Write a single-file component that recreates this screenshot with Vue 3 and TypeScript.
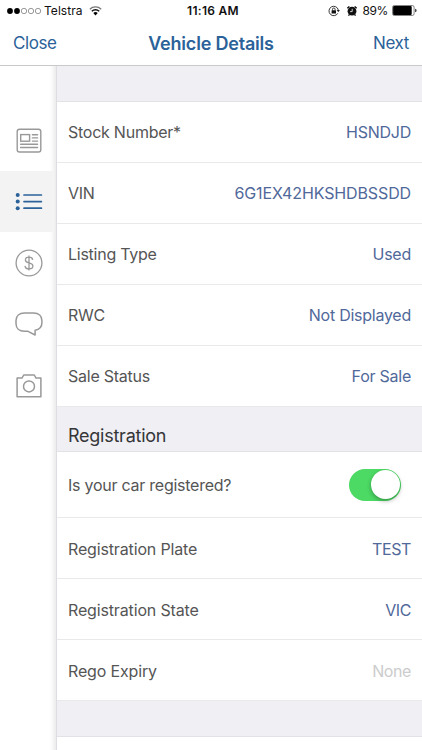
<script setup lang="ts">
interface Field {
  label: string
  value: string
  tone?: string
}

const vehicleFields: Field[] = [
  { label: 'Stock Number*', value: 'HSNDJD' },
  { label: 'VIN', value: '6G1EX42HKSHDBSSDD', tone: 'code' },
  { label: 'Listing Type', value: 'Used' },
  { label: 'RWC', value: 'Not Displayed' },
  { label: 'Sale Status', value: 'For Sale' },
]

const registrationFields: Field[] = [
  { label: 'Registration Plate', value: 'TEST' },
  { label: 'Registration State', value: 'VIC' },
  { label: 'Rego Expiry', value: 'None', tone: 'empty' },
]
</script>

<template>
  <div class="screen">
    <header class="top">
      <div class="status">
        <div class="carrier">
          <svg class="dots" width="36" height="8" viewBox="0 0 36 8">
            <circle cx="3" cy="4" r="2.9" fill="#000" />
            <circle cx="10" cy="4" r="2.9" fill="#000" />
            <g fill="none" stroke="#555" stroke-width=".6">
              <circle cx="17" cy="4" r="2.7" />
              <circle cx="24" cy="4" r="2.7" />
              <circle cx="31" cy="4" r="2.7" />
            </g>
          </svg>
          <span class="carrier-name">Telstra</span>
          <svg class="wifi" width="13" height="10" viewBox="0 0 13 10">
            <path d="M.8 3.2a8.2 8.2 0 0 1 11.4 0" fill="none" stroke="#777" stroke-width="1.3" />
            <path d="M2.8 5.3a5.3 5.3 0 0 1 7.4 0" fill="none" stroke="#111" stroke-width="1.5" />
            <path d="M4.3 7.1a3.2 3.2 0 0 1 4.4 0L6.5 9.4z" fill="#000" />
          </svg>
        </div>
        <span class="time">11:16 AM</span>
        <div class="power">
          <svg width="12" height="12" viewBox="0 0 12 12">
            <path d="M9.8 8.3A4.7 4.7 0 1 1 10.3 5" fill="none" stroke="#222" stroke-width=".9" />
            <path d="M8.7 5h3.2l-1.6 2.2z" fill="#222" />
            <rect x="3.6" y="5.3" width="4.4" height="3.3" rx=".4" fill="#111" />
            <path d="M4.5 5.5V4.3a1.3 1.3 0 0 1 2.6 0v1.2" fill="none" stroke="#111" stroke-width=".8" />
          </svg>
          <svg class="alarm" width="12" height="12" viewBox="0 0 12 12">
            <circle cx="6" cy="6.2" r="4.4" fill="#111" />
            <path d="M1.3 3.3 3.4 1.4M8.6 1.4l2.1 1.9M3.2 9.6 2.5 10.7M8.8 9.6l.7 1.1" stroke="#111" stroke-width="1.4" />
            <path d="M6.2 3.8v2.8H4.1" fill="none" stroke="#fff" stroke-width=".8" />
          </svg>
          <span class="percent">89%</span>
          <svg width="25" height="11" viewBox="0 0 25 11">
            <rect x=".5" y=".5" width="21.6" height="10" rx="1.8" fill="#fff" stroke="#333" stroke-width=".6" />
            <rect x="1.1" y="1.1" width="18.6" height="8.8" rx="1" fill="#000" />
            <path d="M23.2 3.7q1.3.3 1.3 1.8t-1.3 1.8z" fill="#222" />
          </svg>
        </div>
      </div>
      <nav class="navbar">
        <span class="close">Close</span>
        <h1>Vehicle Details</h1>
        <span class="next">Next</span>
      </nav>
    </header>

    <div class="body">
      <aside class="sidebar">
        <div class="tab">
          <svg width="28" height="28" viewBox="0 0 28 28" fill="none" stroke="#999" stroke-width="1.4" stroke-linecap="round">
            <rect x="2.2" y="2.2" width="23.6" height="22.8" rx="2.3" />
            <rect x="5.7" y="7.6" width="8.9" height="6.6" />
            <path d="M17.4 7.7h5.2M17.4 10.9h5.2M17.4 14.1h5.2M5.6 17.3h17M5.6 20.5h17" />
          </svg>
        </div>
        <div class="tab active">
          <svg width="28" height="28" viewBox="0 0 28 28" fill="none" stroke="#2b6299" stroke-width="1.7" stroke-linecap="round">
            <path d="M9 7h17.4M9 13.600h17.4M9 20.200h17.4" />
            <g fill="#2b6299" stroke="none">
              <circle cx="2.7" cy="7" r="2" />
              <circle cx="2.7" cy="13.6" r="2" />
              <circle cx="2.7" cy="20.2" r="2" />
            </g>
          </svg>
        </div>
        <div class="tab">
          <svg width="28" height="28" viewBox="0 0 28 28" fill="none" stroke="#999" stroke-width="1.3">
            <circle cx="14" cy="14" r="12.9" />
            <path d="M17.7 10.8c-.2-1.6-1.6-2.6-3.7-2.6s-3.6 1-3.6 2.7c0 4 7.5 2 7.5 6.1 0 1.8-1.6 2.9-3.9 2.9s-3.9-1.1-4-3M14 6.5v15" />
          </svg>
        </div>
        <div class="tab">
          <svg width="28" height="28" viewBox="0 0 28 28" fill="none" stroke="#999" stroke-width="1.5" stroke-linejoin="round">
            <path d="M9.5 3h9c5.2 0 8.4 3 8.4 7.4v2.4c0 4.500-2.400 6.700-6.800 7.500v4.700L13 21.300H9.500C4.200 21.300 1 18 1 13.500V10.400C1 6 4.300 3 9.500 3z" />
          </svg>
        </div>
        <div class="tab">
          <svg width="28" height="28" viewBox="0 0 28 28" fill="none" stroke="#999" stroke-width="1.5" stroke-linejoin="round">
            <path d="M2.100 7.100h4.900l1.700-3.100h10.600l1.700 3.100h4.900v18.700H2.100z" />
            <circle cx="14" cy="15.400" r="5.500" />
          </svg>
        </div>
      </aside>

      <main class="form">
        <div class="band"></div>
        <div v-for="field in vehicleFields" :key="field.label" class="row">
          <span class="label">{{ field.label }}</span>
          <span class="value" :class="field.tone">{{ field.value }}</span>
        </div>
        <h2 class="band titled">Registration</h2>
        <div class="row tall">
          <span class="label">Is your car registered?</span>
          <span class="switch"><i></i></span>
        </div>
        <div v-for="field in registrationFields" :key="field.label" class="row registration">
          <span class="label">{{ field.label }}</span>
          <span class="value" :class="field.tone">{{ field.value }}</span>
        </div>
        <div class="band"></div>
      </main>
    </div>
  </div>
</template>

<style>
body {
  background: #fff;
}
</style>

<style scoped>
.screen {
  width: 422px;
  height: 750px;
  display: flex;
  flex-direction: column;
  overflow: hidden;
  background: #fff;
  font-family: Inter, sans-serif;
}

.top {
  flex: none;
  height: 66px;
  box-sizing: border-box;
  border-bottom: 1px solid #c9c9cc;
}

.status {
  height: 21px;
  display: grid;
  grid-template-columns: 1fr auto 1fr;
  align-items: center;
  padding: 0 7px;
  font-size: 12px;
  line-height: 21px;
  color: #111;
}

.carrier,
.power {
  display: flex;
  align-items: center;
}

.carrier-name {
  margin-left: 1px;
  letter-spacing: 0.05px;
}

.wifi {
  margin-left: 6px;
}

.time {
  font-weight: 600;
  letter-spacing: 0.3px;
  margin-left: 4px;
}

.power {
  justify-content: flex-end;
  margin-right: -2px;
}

.alarm {
  margin: 0 5px 0 6px;
}

.percent {
  margin-right: 4px;
  letter-spacing: -0.4px;
}

.navbar {
  height: 44px;
  display: grid;
  grid-template-columns: 1fr auto 1fr;
  align-items: center;
  padding: 0 13px;
  color: #2b6299;
  font-size: 17px;
  letter-spacing: -0.4px;
}

h1 {
  margin: 0;
  font-size: 18px;
  font-weight: 600;
  letter-spacing: -0.2px;
}

.next {
  text-align: right;
}

.body {
  flex: 1;
  min-height: 0;
  display: flex;
}

.sidebar {
  flex: none;
  width: 56px;
  box-sizing: border-box;
  padding-top: 44px;
  background: linear-gradient(to right, transparent 49px, rgba(0, 0, 0, 0.02) 52px, rgba(0, 0, 0, 0.08));
}

.tab {
  height: 61.2px;
  width: 53px;
  box-sizing: border-box;
  padding-left: 15px;
  display: flex;
  align-items: center;
}

.active {
  background: #f3f3f3;
}

.form {
  flex: 1;
  min-width: 0;
  border-left: 1px solid #dedee2;
}

.band {
  height: 36px;
  box-sizing: border-box;
  background: #efeff4;
  border-bottom: 1px solid #e2e2e6;
}

.titled {
  margin: 0;
  height: 45px;
  padding: 11px 11px 0;
  font-size: 18px;
  line-height: 36px;
  font-weight: 400;
  letter-spacing: -0.25px;
  color: #353538;
}

.row {
  height: 61px;
  box-sizing: border-box;
  padding: 0 11px;
  display: flex;
  align-items: center;
  justify-content: space-between;
  border-bottom: 1px solid #e9e9eb;
  font-size: 16px;
  letter-spacing: -0.25px;
}

.tall {
  height: 66px;
}

.registration {
  padding-top: 2px;
  letter-spacing: -0.15px;
}

.label {
  color: #555;
}

.value {
  color: #50689a;
  padding-bottom: 1px;
}

.registration .value {
  letter-spacing: -0.4px;
}

.row .code {
  letter-spacing: -0.12px;
}

.registration .empty {
  color: #ccc;
}

.switch {
  width: 52px;
  height: 32px;
  box-sizing: border-box;
  margin-right: 10px;
  padding: 1.5px;
  border-radius: 16px;
  background: #4cd964;
  display: flex;
  justify-content: flex-end;
}

.switch i {
  width: 29px;
  height: 29px;
  border-radius: 50%;
  background: #fff;
  box-shadow: 0 2px 4px rgba(0, 0, 0, 0.3);
}
</style>
